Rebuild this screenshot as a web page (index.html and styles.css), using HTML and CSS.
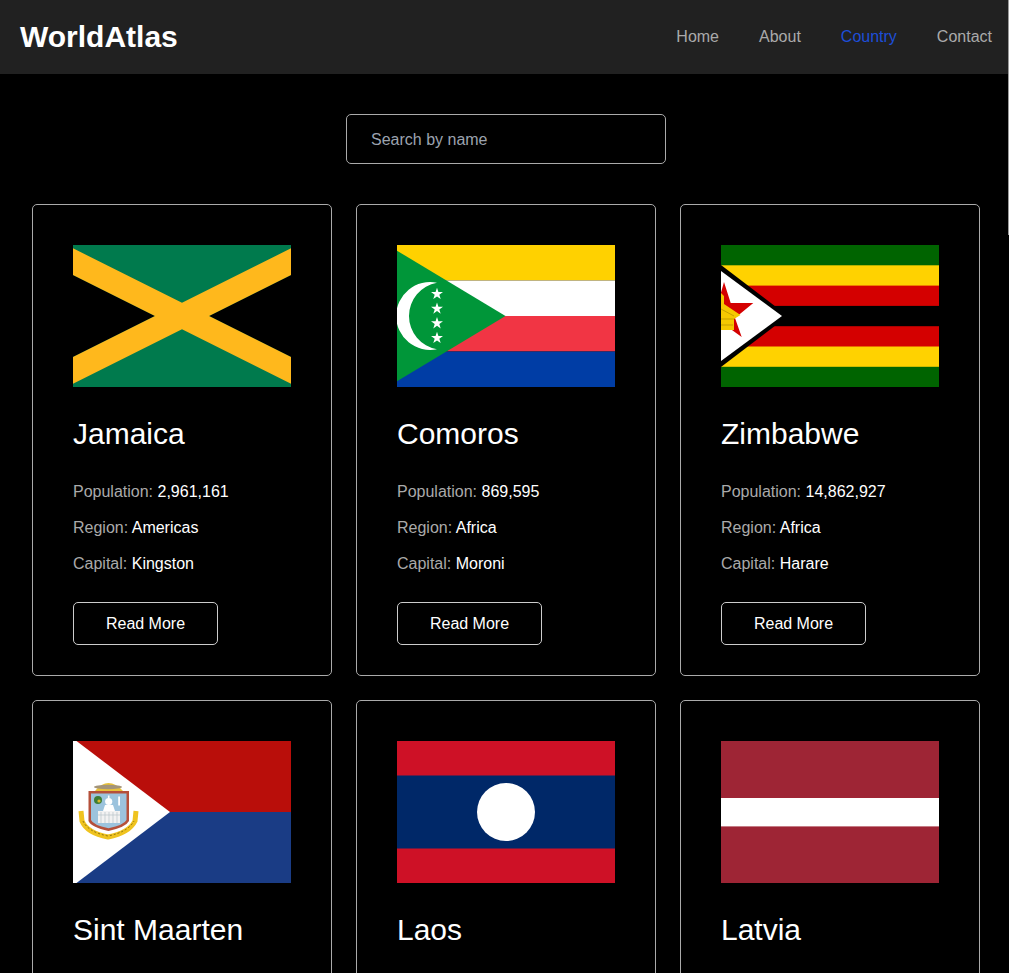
FILE: index.html
```html
<!DOCTYPE html>
<html lang="en">
<head>
  <meta charset="UTF-8">
  <meta name="viewport" content="width=device-width, initial-scale=1.0">
  <title>WorldAtlas</title>
  <link rel="stylesheet" href="styles.css">
</head>
<body>

  <!-- Header -->
  <header class="site-header">
    <div class="logo">WorldAtlas</div>
    <nav class="site-nav">
      <a href="#">Home</a>
      <a href="#">About</a>
      <a href="#" class="active">Country</a>
      <a href="#">Contact</a>
    </nav>
  </header>
  <div class="scroll-edge"></div>

  <main class="content">
    <!-- Search -->
    <div class="search-row">
      <input type="text" class="search-input" placeholder="Search by name">
    </div>

    <!-- Country cards -->
    <div class="country-grid">

      <div class="country-card">
        <svg class="flag" viewBox="0 0 218 142">
          <rect width="218" height="142" fill="#007a4d"/>
          <polygon points="0,30 82,71 0,112" fill="#000"/>
          <polygon points="218,30 136,71 218,112" fill="#000"/>
          <polygon points="0,3.3 109,57.7 218,3.3 218,30 136,71 218,112 218,138.7 109,84.3 0,138.7 0,112 82,71 0,30" fill="#ffb81c"/>
        </svg>
        <h2>Jamaica</h2>
        <p>Population: <span>2,961,161</span></p>
        <p>Region: <span>Americas</span></p>
        <p>Capital: <span>Kingston</span></p>
        <button class="read-more">Read More</button>
      </div>

      <div class="country-card">
        <svg class="flag" viewBox="0 0 218 142">
          <defs>
            <polygon id="star" points="0,-6.3 1.41,-1.95 5.99,-1.95 2.29,0.74 3.7,5.1 0,2.4 -3.7,5.1 -2.29,0.74 -5.99,-1.95 -1.41,-1.95" fill="#fff"/>
          </defs>
          <rect width="218" height="35.5" fill="#ffd100"/>
          <rect y="35.5" width="218" height="35.5" fill="#fff"/>
          <rect y="71" width="218" height="35.5" fill="#f13544"/>
          <rect y="106.5" width="218" height="35.5" fill="#003da5"/>
          <polygon points="0,5.7 108.5,71 0,136.3" fill="#009639"/>
          <path d="M40,37.7 A34,34 0 1 0 40,104.3 A33.8,33.8 0 0 1 40,37.7 Z" fill="#fff"/>
          <use href="#star" x="40" y="49"/>
          <use href="#star" x="40" y="63.7"/>
          <use href="#star" x="40" y="78.3"/>
          <use href="#star" x="40" y="93"/>
        </svg>
        <h2>Comoros</h2>
        <p>Population: <span>869,595</span></p>
        <p>Region: <span>Africa</span></p>
        <p>Capital: <span>Moroni</span></p>
        <button class="read-more">Read More</button>
      </div>

      <div class="country-card">
        <svg class="flag" viewBox="0 0 218 142">
          <rect width="218" height="142" fill="#006400"/>
          <rect y="20.3" width="218" height="101.5" fill="#ffd200"/>
          <rect y="40.6" width="218" height="60.9" fill="#d40000"/>
          <rect y="60.9" width="218" height="20.3" fill="#000"/>
          <polygon points="0,20 67,71 0,122" fill="#000"/>
          <polygon points="0,26 61,71 0,116" fill="#fff"/>
          <polygon points="3,37 9.7,58 32.3,58 14,73 20.7,92 4,80 -10,92 -3,58" fill="#d40000"/>
          <polygon points="0,48 3,51 3,59 19.5,70 13,74 13,85 0,85" fill="#f5c800"/>
          <path d="M0,74 H13 M0,80 H12 M0,64 L13,71" stroke="#a58300" stroke-width="0.6" fill="none"/>
        </svg>
        <h2>Zimbabwe</h2>
        <p>Population: <span>14,862,927</span></p>
        <p>Region: <span>Africa</span></p>
        <p>Capital: <span>Harare</span></p>
        <button class="read-more">Read More</button>
      </div>

      <div class="country-card">
        <svg class="flag" viewBox="0 0 218 142">
          <rect width="218" height="71" fill="#b90e0a"/>
          <rect y="71" width="218" height="71" fill="#1a3c85"/>
          <polygon points="0,0 3.5,0 97,71 3.5,142 0,142" fill="#fff"/>
          <path d="M8,70 L9,80 Q14,92 35,96 Q56,92 62,80 L63,70" fill="none" stroke="#efc31f" stroke-width="5"/>
          <path d="M10,80 Q15,91 35,95 Q55,91 61,80" fill="none" stroke="#6d5a10" stroke-width="0.8" stroke-dasharray="2 2"/>
          <path d="M22,50 Q35,34 50,50 Z" fill="#e8c23a"/>
          <ellipse cx="35" cy="46" rx="14" ry="2.2" fill="#a3947a"/>
          <path d="M15.5,50 H56 V80 Q53,86 35.5,90 Q18,86 15.5,80 Z" fill="#b5503a"/>
          <path d="M18,52.5 H53.5 V79 Q51,84 35.5,87.2 Q20,84 18,79 Z" fill="#9cc3dd"/>
          <circle cx="35.7" cy="60.5" r="3.6" fill="#fff"/>
          <rect x="34.9" y="54.5" width="1.6" height="3" fill="#fff"/>
          <polygon points="30,70 32,64 40,64 42,70" fill="#fff"/>
          <rect x="25" y="70" width="22" height="12" fill="#f2f2f2"/>
          <path d="M25,74 H47 M28,71 V82 M32,71 V82 M36,71 V82 M40,71 V82 M44,71 V82" stroke="#b9c4c9" stroke-width="0.7" fill="none"/>
          <rect x="45.2" y="55.5" width="1.8" height="9" fill="#fff"/>
          <circle cx="25" cy="59" r="4" fill="#3d7d35"/>
          <circle cx="26" cy="60" r="1.6" fill="#d8b92a"/>
        </svg>
        <h2>Sint Maarten</h2>
      </div>

      <div class="country-card">
        <svg class="flag" viewBox="0 0 218 142">
          <rect width="218" height="142" fill="#ce1126"/>
          <rect y="34.5" width="218" height="73" fill="#002868"/>
          <circle cx="109" cy="71" r="29" fill="#fff"/>
        </svg>
        <h2>Laos</h2>
      </div>

      <div class="country-card">
        <svg class="flag" viewBox="0 0 218 142">
          <rect width="218" height="142" fill="#9e2535"/>
          <rect y="57" width="218" height="28.4" fill="#fff"/>
        </svg>
        <h2>Latvia</h2>
      </div>

    </div>
  </main>

</body>
</html>
```

FILE: styles.css
```css
* {
  box-sizing: border-box;
}
html, body {
  height: 100vh;
  overflow: hidden;
}
body {
  margin: 0;
  background-color: #000;
  color: #fff;
  font-family: "Liberation Sans", Arial, sans-serif;
  font-size: 16px;
}

/* header */
.site-header {
  display: flex;
  justify-content: space-between;
  align-items: center;
  height: 74px;
  padding: 0 17px 0 20px;
  background-color: #212121;
}
.logo {
  font-size: 30px;
  font-weight: bold;
}
.site-nav {
  display: flex;
  gap: 40px;
}
.site-nav a {
  color: #aaa;
  text-decoration: none;
}
.site-nav a.active {
  color: #1d4ed8;
}
.scroll-edge {
  position: absolute;
  top: 0;
  right: 0;
  width: 1px;
  height: 235px;
  background-color: #9a9a9a;
}

/* search */
.content {
  padding: 40px 29px 0 32px;
}
.search-row {
  display: flex;
  justify-content: center;
  margin-bottom: 40px;
}
.search-input {
  width: 320px;
  height: 50px;
  padding: 2px 24px 0;
  border: 1px solid #aaa;
  border-radius: 5px;
  background-color: #000;
  color: #fff;
  font-family: inherit;
  font-size: 16px;
}
.search-input::placeholder {
  color: #9ca3af;
}

/* cards */
.country-grid {
  display: grid;
  grid-template-columns: repeat(3, 300px);
  grid-auto-rows: 472px;
  gap: 24px;
}
.country-card {
  padding: 40px;
  border: 1px solid #aaa;
  border-radius: 5px;
}
.flag {
  display: block;
  width: 218px;
  height: 142px;
}
.country-card h2 {
  margin: 30px 0 29px;
  font-size: 30px;
  font-weight: normal;
}
.country-card p {
  margin: 0 0 12px;
  line-height: 24px;
  color: #aaa;
}
.country-card p span {
  color: #fff;
}
.read-more {
  display: block;
  width: 145px;
  height: 43px;
  margin-top: 26px;
  border: 1px solid #ccc;
  border-radius: 5px;
  background-color: transparent;
  color: #fff;
  font-family: inherit;
  font-size: 16px;
}
```
